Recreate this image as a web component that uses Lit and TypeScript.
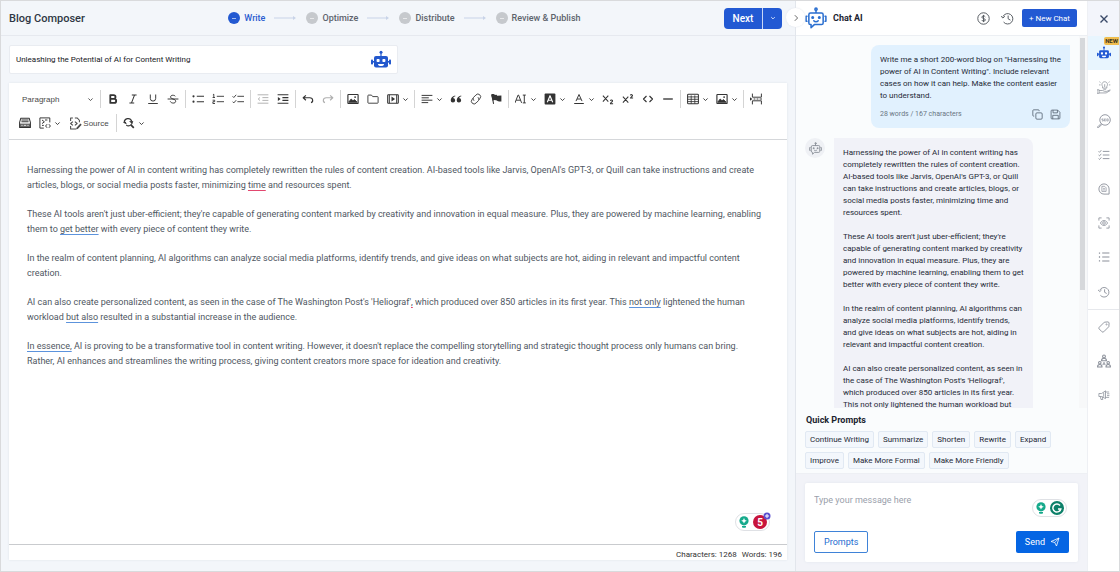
import { LitElement, html, css, svg, nothing } from "lit";
import { customElement, state } from "lit/decorators.js";
import { classMap } from "lit/directives/class-map.js";

/* Line icons on a 20 x 20 grid, drawn with the current text colour. */
const ICONS: Record<string, unknown> = {
  chevron: svg`<path d="M4 7l6 6 6-6" stroke-width="2.6"/>`,
  chevronRight: svg`<path d="M7 3l7 7-7 7" stroke-width="2.2"/>`,
  bold: svg`<path d="M5.500 3.500h5.500a3.200 3.200 0 0 1 0 6.400H5.500zM5.500 9.900h6.500a3.300 3.300 0 0 1 0 6.600H5.500z" stroke-width="3"/>`,
  italic: svg`<path d="M8 3.500h8M4 16.500h8M12.500 3.500l-5 13" stroke-width="1.700"/>`,
  underline: svg`<path d="M5.500 2.500v6.500a4.500 4.500 0 0 0 9 0V2.500M2 17.500h16" stroke-width="1.600"/>`,
  strike: svg`<path d="M14 5.500C13 3.500 6 2.500 6 6.500c0 2 2 2.800 4 3.500 3 1 4.500 2 4.500 3.800C14.500 18 6.500 17.500 5.500 14M1 10h18" stroke-width="1.600"/>`,
  bullets: svg`<path d="M8 5.500h12M8 14.500h12" stroke-width="1.700"/><circle cx="2.500" cy="5.500" r="1.800" fill="currentColor" stroke="none"/><circle cx="2.500" cy="14.500" r="1.800" fill="currentColor" stroke="none"/>`,
  numbers: svg`<path d="M8 5.500h12M8 14.500h12M1.500 3l1.500-1v5.500M1 7.500h4M1 12h3.500v2.500H1.500V17.500H5" stroke-width="1.500"/>`,
  todo: svg`<path d="M9 5.500h11M9 14.500h11M1 5.500l2 2 4-4.500M1 14.500l2 2 4-4.500" stroke-width="1.500"/>`,
  outdent: svg`<path d="M1 3h18M9 7.700h10M9 12.300h10M1 17h18M5 7.500L2 10l3 2.500" stroke-width="1.600"/>`,
  indent: svg`<path d="M1 3h18M9 7.700h10M9 12.300h10M1 17h18" stroke-width="1.700"/><path d="M1.500 6.500L6 10l-4.500 3.500z" fill="currentColor" stroke="none"/>`,
  undo: svg`<path d="M6.500 4L2 8l4.500 4M2.500 8H13c6 0 6 7 2 8" stroke-width="1.900"/>`,
  redo: svg`<path d="M13.500 4L18 8l-4.500 4M17.500 8H7c-6 0-6 7-2 8" stroke-width="1.900"/>`,
  image: svg`<rect x="1.500" y="2.500" width="17" height="15" rx="1" stroke-width="1.900"/><path d="M3 15l4-5 3 3 2.500-2L17 15.500H3z" fill="currentColor"/><circle cx="13.500" cy="6.800" r="1.500" fill="currentColor" stroke="none"/>`,
  folder: svg`<path d="M1.500 4.500a1 1 0 0 1 1-1h5l2 2.500h8a1 1 0 0 1 1 1v9a1 1 0 0 1-1 1h-15a1 1 0 0 1-1-1z" stroke-width="1.500"/>`,
  media: svg`<rect x="1.200" y="3" width="17.600" height="14" rx="1" stroke-width="1.900"/><path d="M4 3v14M16 3v14" stroke-width="1.500"/><path d="M7.500 6l6 4-6 4z" fill="currentColor" stroke="none"/>`,
  align: svg`<path d="M1 4h18M1 8h12M1 12h18M1 16h11" stroke-width="1.600"/>`,
  quote: svg`<path d="M8.500 4C4 5 1.200 8 1.200 12.200a3.700 3.700 0 1 0 4-3.700C5.500 7.300 7 6 9 5.500zM18.500 4c-4.500 1-7.300 4-7.300 8.200a3.700 3.700 0 1 0 4-3.700c.3-1.200 1.800-2.500 3.800-3z" fill="currentColor" stroke="none"/>`,
  link: svg`<path d="M7 13l-1-1a3.400 3.400 0 0 1 0-4.800l4-4a4.400 4.400 0 0 1 6.500 6l-2 2.300M13 7l1 1a3.400 3.400 0 0 1 0 4.800l-4 4a4.400 4.400 0 0 1-6.500-6l2-2.300" stroke-width="1.500"/>`,
  flag: svg`<path d="M3 3l3 15" stroke-width="1.700"/><path d="M2 2.500c4-2 6 1.500 9 .5l1 1.500 7-.5v10c-3 .5-6 0-7.500-1.500C9.500 12 7 11 4.500 13z" fill="currentColor" stroke="none"/>`,
  fontSize: svg`<path d="M0 16.500L5 3.500h1l5 13M2 12h7M15.500 3.500v13M13 3.500h5M13 16.500h5" stroke-width="1.600"/>`,
  fontBack: svg`<rect x="1" y="1" width="18" height="18" rx="1.500" fill="currentColor" stroke="none"/><path d="M5.500 15.500L10 4.500l4.500 11M7.200 12h5.600" stroke="#fff" stroke-width="1.900"/>`,
  fontColor: svg`<path d="M5 13.500L10 2.500l5 11M6.800 10h6.400" stroke-width="1.600"/><path d="M2 17.500h16" stroke-width="1.700"/>`,
  sub: svg`<path d="M1.500 4.500l9 10M10.500 4.500l-9 10M14 13c.5-2 4-1.500 3.500.5-.3 1.500-3.500 2.500-3.500 4.500h4.500" stroke-width="1.700"/>`,
  sup: svg`<path d="M1.500 6l9 10M10.500 6l-9 10M14 4c.5-2 4-1.500 3.500.5C17.200 6 14 7 14 8.500h4.500" stroke-width="1.700"/>`,
  code: svg`<path d="M7.500 5L2.500 10l5 5M12.500 5l5 5-5 5" stroke-width="1.900"/>`,
  rule: svg`<path d="M2 10h16" stroke-width="2.200"/>`,
  table: svg`<rect x="1" y="2" width="18" height="16" rx="1.500" stroke-width="1.700"/><path d="M1 6.500h18M1 10.500h18M1 14.300h18M7 4v14M13 4v14" stroke-width="1.400"/>`,
  pageBreak: svg`<path d="M4 1v6h15V1M4 19v-6h15v6" stroke-width="1.600"/><path d="M6 10h3M11 10h3M16 10h4" stroke-width="1.600"/><path d="M0 7l4 3-4 3z" fill="currentColor" stroke="none"/>`,
  htmlEmbed: svg`<path d="M3 2h14l2 7v8.500H1V9zM4 5h12M4 8h12" stroke-width="1.700"/><path d="M1 11h18v6H1z" fill="currentColor" opacity=".75" stroke="none"/><path d="M4 14h2M8 14h4M14 14h2" stroke="#fff" stroke-width="1.300"/>`,
  showBlocks: svg`<path d="M18 9V1.500H1.500v17H8M5 5l4 3-4 3M10 5h4M5 14h3M13.500 12L11 15l2.500 3M16.500 12l2.500 3-2.500 3" stroke-width="1.600"/>`,
  source: svg`<path d="M6 1.500H2.500V6M2.500 14v4.500H11M9 1.500h3.500L16 5v3M6 7l-3.500 3L6 13M9 7l3.500 3L9 13" stroke-width="1.600"/><path d="M11.500 16.500l6-6.500 2 2-6 6.500-2.500.5z" fill="currentColor" stroke="none"/>`,
  find: svg`<path d="M13.500 13.500L18 18" stroke-width="2.800"/><path d="M2 9.500C2 2 12 0 14.500 7M15.500 8.500C15.500 14 9 16.500 5.500 13.500" stroke-width="2"/><path d="M17.500 6.500l-3.500 4-4-3.500zM0 9l4.500-1 2 4.500z" fill="currentColor" stroke="none"/>`,
  dollar: svg`<circle cx="10" cy="10" r="8.800" stroke-width="1.500"/><path d="M12.800 7.500C12 5.500 7.500 5.500 7.500 8s5.300 1.500 5.300 4.200S8 14.500 7.200 12.300M10 4.500v11" stroke-width="1.500"/>`,
  history: svg`<path d="M3 7A8 8 0 1 1 4 15.500M0 6.500l3 2.800L6 6.500M11 5.500V10.500l3.500 2" stroke-width="1.500"/>`,
  copy: svg`<rect x="7" y="7" width="11.500" height="11.500" rx="2"/><path d="M4 13H3a1.500 1.500 0 0 1-1.500-1.500V3A1.500 1.500 0 0 1 3 1.500h8.500A1.500 1.500 0 0 1 13 3v1"/>`,
  save: svg`<path d="M2 3.500A1.500 1.500 0 0 1 3.500 2H14l4 4v10.500a1.500 1.500 0 0 1-1.500 1.500h-13A1.500 1.500 0 0 1 2 16.500zM5.500 2v5h8V2M5 18v-6.500h10V18"/>`,
  close: svg`<path d="M3 3l14 14M17 3L3 17" stroke-width="2.800"/>`,
  idea: svg`<path d="M8 9.500C5.500 5 8.500 2.500 11 2.500s5.500 2.500 3 7v2H8zM9 13.200h4M3.500 2.500l1.500 1M3 7h2M18 2.500l-1.500 1M19 7h-2M11 6v4M0 14h3v5H0zM3 15h5l3 1.200h3L19 14M3 18.500h10l6-3.500" stroke-width="1.100"/>`,
  seo: svg`<circle cx="11.500" cy="8.500" r="7.500" stroke-width="1.300"/><path d="M6 13.500L1.500 18c-2 1 0 2 1 1L7 15" stroke-width="1.300"/><path d="M9 7H7v1.500h2V10H7M12.500 7h-2v3h2M10.500 8.500h2M14 7h2v3h-2z" stroke-width=".9"/>`,
  checklist: svg`<path d="M8 4h11M8 10h11M8 16h11M1 4l1.500 1.500L5.500 2M1 10l1.500 1.500L5.500 8M1 16l1.500 1.500L5.500 14" stroke-width="1.500"/>`,
  note: svg`<path d="M10 1.500a8.500 8.500 0 0 0 0 17h8.500V10A8.500 8.500 0 0 0 10 1.500z" stroke-width="1.500"/><path d="M6.500 5.500h4.500l2.500 2.500v6h-7zM8.500 9h3M8.500 11.500h3" stroke-width="1.200"/>`,
  scan: svg`<path d="M1.500 6V1.500H6M14 1.500h4.500V6M18.500 14v4.500H14M6 18.500H1.500V14" stroke-width="1.400"/><path d="M4 10c3-5.500 9-5.500 12 0-3 5.500-9 5.500-12 0z" stroke-width="1.300"/><circle cx="10" cy="10" r="2.200" stroke-width="1.300"/>`,
  list: svg`<path d="M7 3.500h12M7 10h12M7 16.500h12" stroke-width="1.700"/><path d="M1.500 3.500h2M1.500 10h2M1.500 16.500h2" stroke-width="2.200"/>`,
  tag: svg`<path d="M10.500 2l6-.5c1 0 2 1 2 2L18 9.500l-8.500 8.500a2 2 0 0 1-2.800 0l-4.700-4.700a2 2 0 0 1 0-2.800z" stroke-width="1.500"/><circle cx="14.300" cy="5.700" r="1" stroke-width="1.200"/>`,
  team: svg`<circle cx="10" cy="3.500" r="2"/><path d="M6.500 9.500c0-4.500 7-4.500 7 0z"/><circle cx="4" cy="12.500" r="1.800"/><path d="M.8 18.500c0-4.500 6.400-4.500 6.400 0z"/><circle cx="16" cy="12.500" r="1.800"/><path d="M12.800 18.500c0-4.500 6.400-4.500 6.400 0zM10 11.500v2.500l-2 1M10 14l2 1"/>`,
  megaphone: svg`<path d="M1.500 7.500H6L12.500 3v13L6 12.500H1.500zM4 12.500l1 5h3l-1-5M12.500 5h6M15 8h4M15 11h4M12.500 14h6M9.500 6v7" stroke-width="1.300"/>`,
  send: svg`<path d="M2 9L18 2l-5 16-3.500-7z" stroke-width="1.600"/><path d="M9.500 11L18 2" stroke-width="1.400"/>`,
};

const icon = (name: string, size = 12) => html`<svg
  width=${size} height=${size} viewBox="0 0 20 20" fill="none" stroke="currentColor"
  stroke-width="1.500" stroke-linecap="butt" stroke-linejoin="round" aria-hidden="true"
>${ICONS[name]}</svg>`;

const solidRobot = (size: number) => html`<svg width=${size} height=${size} viewBox="0 0 20 20" aria-hidden="true">
  <g fill="currentColor">
    <circle cx="10" cy="2.300" r="1.500"/><rect x="9.400" y="3" width="1.200" height="4"/>
    <rect x="3" y="6" width="14" height="11.500" rx="2"/>
    <rect x="0" y="9.500" width="2" height="5" rx=".8"/><rect x="18" y="9.500" width="2" height="5" rx=".8"/>
    <rect x="1.500" y="11" width="17" height="1.600"/>
  </g>
  <g fill="#fff"><rect x="5.600" y="9" width="3" height="3" rx=".8"/><rect x="11.400" y="9" width="3" height="3" rx=".8"/>
  <path d="M7 14h6v.6a2 2 0 0 1-2 1.400H9a2 2 0 0 1-2-1.400z"/></g></svg>`;

const lineRobot = (size: number) => html`<svg width=${size} height=${size} viewBox="0 0 20 20" fill="none"
  stroke="currentColor" stroke-width="1.400" stroke-linecap="round" stroke-linejoin="round" aria-hidden="true">
  <circle cx="10" cy="2" r="1"/><path d="M10 3v2.500M3.500 7a1.500 1.500 0 0 1 1.500-1.500h10A1.500 1.500 0 0 1 16.500 7v7.500A1.500 1.500 0 0 1 15 16H8.500l-3 2.800V16H5a1.500 1.500 0 0 1-1.500-1.500zM1.800 8.500H1v4.500h.8M18.200 8.500h.8v4.500h-.8"/>
  <path d="M8 12.500c1 1.200 3 1.200 4 0"/><circle cx="7" cy="9.500" r=".7" fill="currentColor"/><circle cx="13" cy="9.500" r=".7" fill="currentColor"/></svg>`;

const bulb = html`<svg width="12" height="12" viewBox="0 0 12 12" aria-hidden="true">
  <circle cx="6" cy="4.800" r="4.600" fill="#15a98b"/><path d="M6 2l.9 1.900 1.900.9-1.900.9L6 7.600l-.9-1.900-1.900-.9 1.900-.9z" fill="#fff"/>
  <path d="M4 9.900h4v.8a1 1 0 0 1-1 1H5a1 1 0 0 1-1-1z" fill="#15a98b"/></svg>`;

type Tool = { icon: string; label: string; split?: boolean; off?: boolean };
const t = (name: string, label: string, split = false, off = false): Tool => ({ icon: name, label, split, off });

const ROW_ONE: Tool[][] = [
  [t("bold", "Bold"), t("italic", "Italic"), t("underline", "Underline"), t("strike", "Strikethrough")],
  [t("bullets", "Bulleted list"), t("numbers", "Numbered list"), t("todo", "To-do list")],
  [t("outdent", "Decrease indent", false, true), t("indent", "Increase indent")],
  [t("undo", "Undo"), t("redo", "Redo", false, true)],
  [t("image", "Insert image"), t("folder", "File manager"), t("media", "Insert media", true)],
  [t("align", "Text alignment", true), t("quote", "Block quote"), t("link", "Link"), t("flag", "Bookmark")],
  [t("fontSize", "Font size", true), t("fontBack", "Font background color", true), t("fontColor", "Font color", true),
    t("sub", "Subscript"), t("sup", "Superscript"), t("code", "Code"), t("rule", "Horizontal line")],
  [t("table", "Insert table", true), t("image", "Image styles", true)],
  [t("pageBreak", "Page break")],
];

const REPLY = [
  "Harnessing the power of AI in content writing has completely rewritten the rules of content creation. AI-based tools like Jarvis, OpenAI's GPT-3, or Quill can take instructions and create articles, blogs, or social media posts faster, minimizing time and resources spent.",
  "These AI tools aren't just uber-efficient; they're capable of generating content marked by creativity and innovation in equal measure. Plus, they are powered by machine learning, enabling them to get better with every piece of content they write.",
  "In the realm of content planning, AI algorithms can analyze social media platforms, identify trends, and give ideas on what subjects are hot, aiding in relevant and impactful content creation.",
  "AI can also create personalized content, as seen in the case of The Washington Post's 'Heliograf', which produced over 850 articles in its first year. This not only lightened the human workload but also resulted in a substantial increase in the audience.",
];

const base = css`
  * { box-sizing: border-box; }
  button, input, textarea, select { font: inherit; color: inherit; margin: 0; padding: 0; border: 0; background: none; outline: 0; }
  button { display: inline-flex; align-items: center; justify-content: center; cursor: pointer; white-space: nowrap; }
  svg { display: block; flex: none; }
  h1, h2, p, ol, ul { margin: 0; padding: 0; font-weight: inherit; font-size: inherit; }
  ol, ul { list-style: none; }
`;

@customElement("blog-editor")
export class BlogEditor extends LitElement {
  static styles = [base, css`
    :host { display: flex; flex-direction: column; min-width: 0; background: #f3f6fa; }
    .top { display: flex; align-items: center; justify-content: space-between; height: 35px; flex: none;
      padding: 0 13px 0 8px; border-bottom: 1px solid #e6e9ef; }
    .top h1 { font-size: 11px; font-weight: 500; color: #2f3744; }
    .steps { display: flex; align-items: center; gap: 9px; font-size: 9px; font-weight: 500; color: #5d636c; }
    .step { display: flex; align-items: center; gap: 4px; }
    .step.active { color: #2b5dd0; }
    .dot { display: grid; place-items: center; width: 12px; height: 12px; border-radius: 50%; background: #c6c9cd; }
    .dot::after { content: ""; width: 4px; height: 1px; background: #ffffff99; }
    .active .dot { background: #2359d1; }
    .arrow { color: #c8d3e8; }
    .next { display: flex; height: 21px; border-radius: 4px; overflow: hidden; background: #2259d3; color: #fff; font-weight: 500; }
    .next button:first-child { width: 39px; border-right: 1px solid #c9d7f6; }
    .next button:last-child { width: 19px; }
    .body { flex: 1; min-height: 0; display: flex; flex-direction: column; gap: 9px; padding: 9px 8px 11px; }
    .title { display: flex; align-items: center; width: 50%; height: 29px; flex: none; padding: 0 6px;
      background: #fff; border: 1px solid #e9ecf1; border-radius: 2px; color: #2358cd; }
    .title input { flex: 1; min-width: 0; font-size: 8px; color: #16181c; }
    .doc { flex: 1; min-height: 0; display: flex; flex-direction: column; background: #fff; box-shadow: 0 0 2px #dde2ea; }
    .tools { display: flex; flex-wrap: wrap; padding: 4px 6px 4px 6px; border-bottom: 1px solid #d5d7da; color: #333;
      font-family: "Liberation Sans", Arial, sans-serif; font-size: 8px; }
    .tools > * { height: 24px; }
    .heading { position: relative; display: flex; align-items: center; width: 83px; color: #4a4a4a; }
    .heading select { appearance: none; width: 100%; height: 20px; padding-left: 7px; }
    .heading svg { position: absolute; right: 4px; pointer-events: none; }
    .tool { width: 20px; }
    .tool.split { width: 29px; gap: 3px; }
    .tool.off { color: #b0b0b0; }
    .tool.text { width: 50px; gap: 1px; color: #4a4a4a; }
    .sep { width: 1px; margin: 0 2px; background: linear-gradient(#d4d4d4, #d4d4d4) center / 1px 18px no-repeat; }
    .page { flex: 1; min-height: 0; overflow: auto; padding: 23px 22px 23px 18px; color: #4f5762; font-size: 9px; line-height: 15px; outline: 0; }
    .page p + p { margin-top: 14px; }
    u { text-decoration: underline 1px #5c93dc; text-underline-offset: 2px; text-decoration-skip-ink: none; }
    u.spell { text-decoration-color: #e2476f; }
    .assist { position: relative; display: flex; align-items: center; align-self: flex-end; gap: 3px; height: 18px; margin: 0 17px 13px 0;
      padding: 0 2px; border: 1px solid #dfe1e5; border-radius: 9px; background: #fff; }
    .issues { display: grid; place-items: center; width: 14px; height: 14px; border-radius: 50%; background: #c8143c; color: #fff; font-weight: 700; }
    .plus { position: absolute; right: -2px; top: -2px; }
    .count { display: flex; align-items: center; justify-content: flex-end; gap: 5px; height: 16px; flex: none;
      padding: 3px 5px 0; border-top: 1px solid #c9cbce; font-size: 8px; color: #333; }
  `];

  private tool(x: Tool) {
    return html`<button class=${classMap({ tool: true, split: !!x.split, off: !!x.off })} aria-label=${x.label} ?disabled=${x.off}>
      ${icon(x.icon)}${x.split ? icon("chevron", 7) : nothing}</button>`;
  }

  render() {
    const steps = ["Write", "Optimize", "Distribute", "Review & Publish"];
    return html`
      <header class="top">
        <h1>Blog Composer</h1>
        <ol class="steps">
          ${steps.map((s, i) => html`${i ? html`<li class="arrow" aria-hidden="true"><svg width="23" height="6" viewBox="0 0 23 6">
              <path d="M0 3h20" stroke="currentColor"/><path d="M19 1l3 2-3 2z" fill="currentColor"/></svg></li>` : nothing}
            <li class=${classMap({ step: true, active: i === 0 })}><span class="dot"></span>${s}</li>`)}
        </ol>
        <div class="next"><button>Next</button><button aria-label="More actions">${icon("chevron", 6)}</button></div>
      </header>
      <div class="body">
        <div class="title"><input aria-label="Blog title" value="Unleashing the Potential of AI for Content Writing" />${solidRobot(20)}</div>
        <section class="doc">
          <div class="tools" role="toolbar" aria-label="Editor toolbar">
            <label class="heading"><select aria-label="Heading"><option>Paragraph</option></select>${icon("chevron", 7)}</label>
            ${ROW_ONE.map((g) => html`<span class="sep"></span>${g.map((x) => this.tool(x))}`)}
            ${this.tool(t("htmlEmbed", "HTML embed"))}${this.tool(t("showBlocks", "Show blocks", true))}
            <button class="tool text">${icon("source", 13)}Source</button>
            <span class="sep"></span>${this.tool(t("find", "Find and replace", true))}
          </div>
          <div class="page" contenteditable="true" spellcheck="false" role="textbox" aria-label="Blog content">
            <p>Harnessing the power of AI in content writing has completely rewritten the rules of content creation. AI-based tools like Jarvis, OpenAI's GPT-3, or Quill can take instructions and create articles, blogs, or social media posts faster, minimizing <u class="spell">time</u> and resources spent.</p>
            <p>These AI tools aren't just uber-efficient; they're capable of generating content marked by creativity and innovation in equal measure. Plus, they are powered by machine learning, enabling them to <u>get better</u> with every piece of content they write.</p>
            <p>In the realm of content planning, AI algorithms can analyze social media platforms, identify trends, and give ideas on what subjects are hot, aiding in relevant and impactful content creation.</p>
            <p>AI can also create personalized content, as seen in the case of The Washington Post's 'Heliograf'<u class="spell">,</u> which produced over 850 articles in its first year. This <u>not only</u> lightened the human workload <u>but also</u> resulted in a substantial increase in the audience.</p>
            <p><u>In essence,</u> AI is proving to be a transformative tool in content writing. However, it doesn't replace the compelling storytelling and strategic thought process only humans can bring. Rather, AI enhances and streamlines the writing process, giving content creators more space for ideation and creativity.</p>
          </div>
          <div class="assist">${bulb}<span class="issues">5</span>
            <svg class="plus" width="8" height="8" viewBox="0 0 8 8"><circle cx="4" cy="4" r="3.500" fill="#5a4fcf"/><path d="M2 4h4M4 2v4" stroke="#fff"/></svg></div>
          <footer class="count"><span>Characters: 1268</span><span>Words: 196</span></footer>
        </section>
      </div>`;
  }
}

@customElement("chat-panel")
export class ChatPanel extends LitElement {
  static styles = [base, css`
    :host { display: flex; flex-direction: column; position: relative; border-left: 1px solid #e2e6ec; background: #fafcfd; font-size: 8px; color: #1f2a37; }
    .collapse { position: absolute; left: -10px; top: 7px; width: 19px; height: 19px; border-radius: 50%; background: #fff; color: #555; box-shadow: 0 0 2px #dfe3ea; }
    .head { display: flex; align-items: center; height: 35px; flex: none; padding: 0 10px 0 9px; background: #fff;
      border-bottom: 1px solid #eceff3; color: #2b6fd0; }
    .head h2 { flex: 1; margin-left: 6px; font-size: 9px; font-weight: 700; color: #1b2430; }
    .head button { color: #555a61; }
    .head button + button { margin-left: 11px; }
    .head button.new { height: 18px; margin-left: 8px; padding: 0 7px; border-radius: 2px; background: #2259d3; color: #fff; }
    .log { position: relative; flex: 1; min-height: 0; display: flex; }
    .scroll { flex: 1; overflow: auto; scrollbar-width: none; padding: 9px 17px 0 9px; line-height: 12px; }
    .thumb { position: absolute; right: 2px; top: 2px; bottom: 118px; width: 5px; background: #d6d8db; }
    .track { position: absolute; right: 0; top: 0; bottom: 0; width: 8px; background: #f7f8f9; }
    .mine { width: 199px; margin-left: auto; padding: 9px 9px 8px; border-radius: 8px 0 8px 8px; background: #e1f1fe; }
    .meta { display: flex; align-items: center; gap: 7px; margin-top: 6px; font-size: 7px; color: #6a7683; }
    .meta span { flex: 1; }
    .meta button { color: #566472; }
    .reply { display: flex; align-items: flex-start; gap: 9px; margin-top: 10px; }
    .avatar { display: grid; place-items: center; width: 20px; height: 20px; border-radius: 50%; background: #eff1f5; color: #8a8f98; }
    .bubble { width: 199px; padding: 9px; border-radius: 0 8px 8px 8px; background: #f1f2f8; }
    .bubble p + p { margin-top: 12px; }
    .quick { flex: none; padding: 5px 8px 4px 9px; border-bottom: 1px solid #eef0f4; }
    .quick h2 { margin: 1px 1px 5px; font-size: 9px; line-height: 12px; font-weight: 700; color: #1b2430; }
    .chips { display: flex; flex-wrap: wrap; gap: 4px; }
    .chips button { height: 17px; padding: 0 4px; border: 1px solid #e1e9f3; border-radius: 2px; background: #f3f7fc; }
    .foot { flex: none; padding: 9px; background: #f2f3f8; }
    form { display: grid; grid-template-columns: 1fr auto; row-gap: 8px; padding: 10px 9px 9px; background: #fff; border-radius: 2px; box-shadow: 0 0 3px #e3e6ee; font-size: 9px; }
    textarea { resize: none; height: 30px; min-width: 0; width: 100%; line-height: 14px; }
    textarea::placeholder { color: #9aa0ab; }
    .assist { display: flex; align-items: center; gap: 3px; height: 18px; margin: 6px 2px 0 0; padding: 0 2px; border: 1px solid #dfe1e5; border-radius: 9px; }
    .actions { grid-column: 1 / -1; display: flex; justify-content: space-between; }
    .actions button { height: 22px; gap: 5px; padding: 0 9px; border-radius: 2px; }
    .prompts { border: 1px solid #3f83d8; color: #1d6bd0; }
    .send { background: #0565e3; color: #fff; }
  `];

  render() {
    const chips = ["Continue Writing", "Summarize", "Shorten", "Rewrite", "Expand", "Improve", "Make More Formal", "Make More Friendly"];
    return html`
      <header class="head">${lineRobot(22)}<h2>Chat AI</h2>
        <button aria-label="Credits">${icon("dollar", 13)}</button>
        <button aria-label="History">${icon("history", 13)}</button>
        <button class="new">+ New Chat</button>
      </header>
      <div class="log">
        <div class="scroll">
          <div class="mine">
            <p>Write me a short 200-word blog on "Harnessing the power of AI in Content Writing". Include relevant cases on how it can help. Make the content easier to understand.</p>
            <div class="meta"><span>28 words / 167 characters</span><button aria-label="Copy">${icon("copy", 11)}</button><button aria-label="Save">${icon("save", 11)}</button></div>
          </div>
          <div class="reply"><span class="avatar">${lineRobot(13)}</span>
            <div class="bubble">${REPLY.map((p) => html`<p>${p}</p>`)}</div>
          </div>
        </div>
        <div class="track"></div><div class="thumb"></div>
      </div>
      <section class="quick"><h2>Quick Prompts</h2><div class="chips">${chips.map((c) => html`<button>${c}</button>`)}</div></section>
      <div class="foot"><form @submit=${(e: Event) => e.preventDefault()}>
        <textarea aria-label="Message" placeholder="Type your message here"></textarea>
        <div class="assist">${bulb}<svg width="14" height="14" viewBox="0 0 14 14"><circle cx="7" cy="7" r="7" fill="#0d8069"/>
          <path d="M10 4.500A4 4 0 1 0 10.800 8H8" fill="none" stroke="#fff" stroke-width="1.500"/></svg></div>
        <div class="actions"><button type="button" class="prompts">Prompts</button><button class="send">Send ${icon("send", 10)}</button></div>
      </form></div>
      <button class="collapse" aria-label="Collapse chat">${icon("chevronRight", 8)}</button>`;
  }
}

@customElement("tool-rail")
export class ToolRail extends LitElement {
  static styles = [base, css`
    :host { display: block; background: #fff; border-left: 1px solid #eef0f4; color: #8b909a; }
    button { display: flex; position: relative; width: 100%; height: 34px; }
    .close { height: 35px; background: #f3f5fb; color: #3a4a68; }
    .active { background: #e8f5fe; color: #2259d3; }
    .last { height: 36px; border-bottom: 1px solid #e6e8ec; }
    .badge { position: absolute; right: 0; top: 1px; height: 8px; padding: 0 1px; border-radius: 2px 0 0 2px; background: #f0bd4f; color: #3b3420;
      font-size: 6px; line-height: 8px; font-weight: 700; }
  `];
  @state() private current = "Chat AI";
  render() {
    const items = [["idea", "Ideas"], ["seo", "SEO"], ["checklist", "Checklist"], ["note", "Brief"], ["scan", "Preview"], ["list", "Outline"], ["history", "History"],
      ["tag", "Tags"], ["team", "Team"], ["megaphone", "Promote"]];
    const big = ["idea", "seo", "team"];
    return html`<button class="close" aria-label="Close">${icon("close", 10)}</button>
      <button class=${classMap({ active: this.current === "Chat AI" })} aria-label="Chat AI" @click=${() => (this.current = "Chat AI")}>${solidRobot(14)}<span class="badge">NEW</span></button>
      ${items.map(([i, l]) => html`<button class=${classMap({ last: i === "history", active: this.current === l })} aria-label=${l}
        @click=${() => (this.current = l)}>${icon(i, big.includes(i) ? 14 : 12)}</button>`)}`;
  }
}

@customElement("app-root")
export class AppRoot extends LitElement {
  static styles = css`
    :host { display: grid; grid-template-columns: minmax(0, 1fr) 292px 32px; box-sizing: border-box; height: 100vh; border: 1px solid #d9dadc;
      font-family: Roboto, sans-serif; font-size: 10px; line-height: normal; }
    blog-editor, chat-panel, tool-rail { min-height: 0; }
  `;
  render() {
    return html`<blog-editor></blog-editor><chat-panel></chat-panel><tool-rail></tool-rail>`;
  }
}
